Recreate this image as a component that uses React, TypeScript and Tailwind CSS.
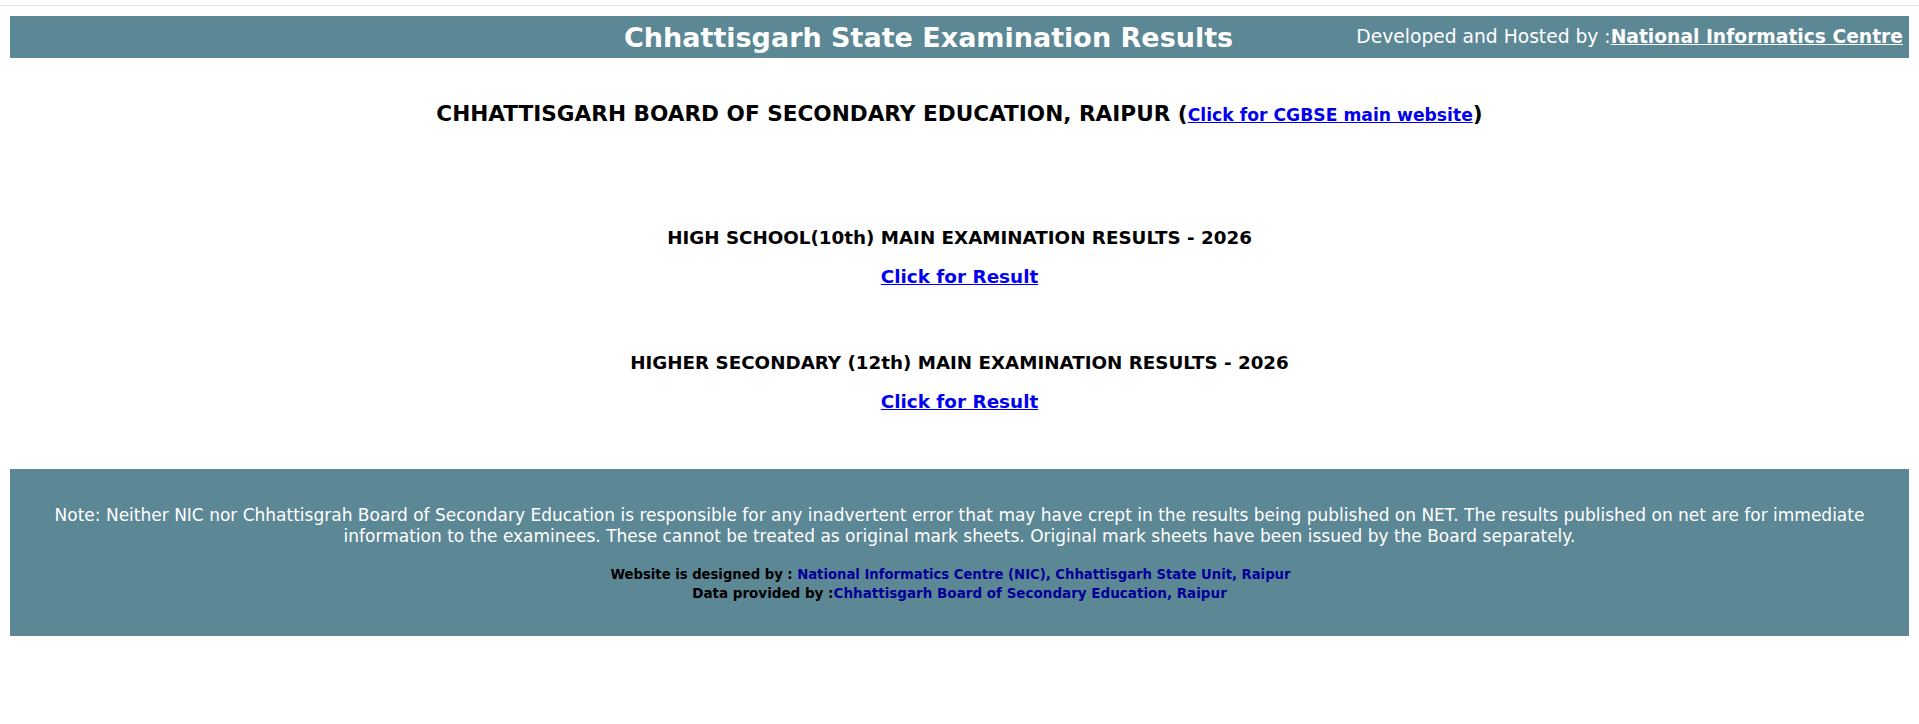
const App = () => {
  return (
    <div className="min-h-screen bg-white font-['DejaVu_Sans',Verdana,sans-serif] text-black">
      <div className="h-[5px]" />
      <div className="h-px bg-[#e3e3e3]" />

      {/* Title bar */}
      <div className="mx-[10px] mt-[10px] flex h-[42px] items-center bg-[#5c8795] pl-[614px] pr-[6px] text-white">
        <span className="text-[27px] font-bold leading-none">Chhattisgarh State Examination Results</span>
        <span className="ml-auto text-[18.7px] leading-none">
          Developed and Hosted by :
          <a href="#" className="font-bold underline">National Informatics Centre</a>
        </span>
      </div>

      <div className="mt-[40px] text-center text-[21.6px] font-bold">
        CHHATTISGARH BOARD OF SECONDARY EDUCATION, RAIPUR (
        <a href="#" className="text-[17.2px] text-[#0000ee] underline">Click for CGBSE main website</a>)
      </div>

      <div className="mt-[94px] flex flex-col items-center gap-[11px]">
        <div className="text-[18.3px] font-bold">HIGH SCHOOL(10th) MAIN EXAMINATION RESULTS - 2026</div>
        <a href="#" className="text-[18.4px] font-bold text-[#0000ee] underline">Click for Result</a>
      </div>

      <div className="mt-[59px] flex flex-col items-center gap-[11px]">
        <div className="text-[18.3px] font-bold">HIGHER SECONDARY (12th) MAIN EXAMINATION RESULTS - 2026</div>
        <a href="#" className="text-[18.4px] font-bold text-[#0000ee] underline">Click for Result</a>
      </div>

      {/* Footer note */}
      <div className="mx-[10px] mt-[54px] flex h-[167px] flex-col items-center bg-[#5c8795] px-[40px] pt-[36px] text-center">
        <p className="text-[17px] leading-[21px] text-white">
          Note: Neither NIC nor Chhattisgrah Board of Secondary Education is responsible for any inadvertent error that may have crept in the results being published on NET. The results published on net are for immediate information to the examinees. These cannot be treated as original mark sheets. Original mark sheets have been issued by the Board separately.
        </p>
        <div className="mt-[19px] flex flex-col items-center text-[13.2px] font-bold leading-[18px]">
          <div className="pr-[18px]">
            Website is designed by : <span className="text-[#000099]">National Informatics Centre (NIC), Chhattisgarh State Unit, Raipur</span>
          </div>
          <div className="text-[13.5px]">
            Data provided by :<span className="text-[#000099]">Chhattisgarh Board of Secondary Education, Raipur</span>
          </div>
        </div>
      </div>
    </div>
  );
};

export default App;
